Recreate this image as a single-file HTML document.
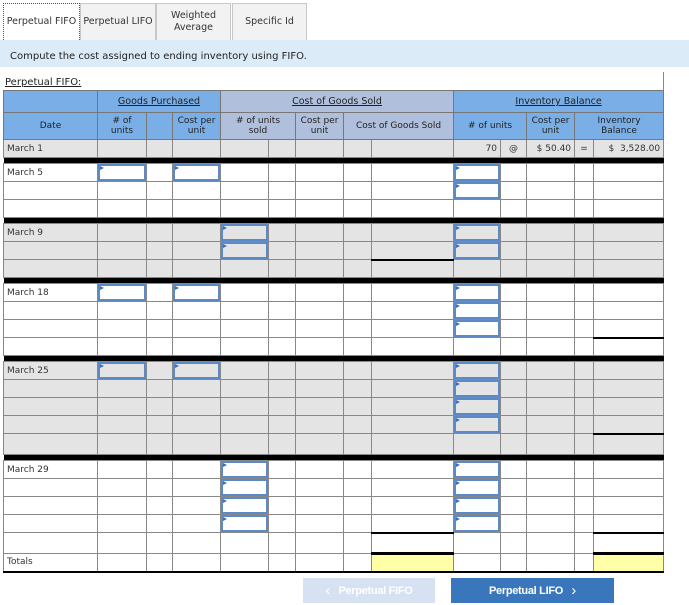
<!DOCTYPE html>
<html><head><meta charset="utf-8"><style>
*{margin:0;padding:0;box-sizing:border-box}
body{width:689px;height:605px;background:#fff;font-family:"DejaVu Sans","Liberation Sans",sans-serif;font-size:9px;color:#222;position:relative;overflow:hidden}
.tab{position:absolute;top:3px;height:37px;border:1px solid #c8c8c8;border-bottom:none;background:#f2f2f2;display:flex;align-items:center;justify-content:center;text-align:center;font-size:9.5px;line-height:12px;color:#333}
.bar{position:absolute;top:40px;left:0;width:689px;height:27px;background:#dcebf8;font-size:10px;padding:12px 0 0 10px;line-height:10px;color:#222}
.ttl{position:absolute;top:77px;left:5px;font-size:10px;text-decoration:underline;color:#222}
table{position:absolute;left:3px;top:90px;border-collapse:collapse;table-layout:fixed;width:660px}
td{border:1px solid #888;height:18px;padding:0 3px;position:relative;font-size:9px;white-space:nowrap;overflow:visible;color:#333}
.h td{background:#7aaee6;text-align:center;color:#222;border-color:#777}
.h td.c{background:#b0c0dc}
.h1 td{height:22px;text-decoration:underline;font-size:9.5px}
.h2 td{height:27px;font-size:9px;line-height:10px;text-decoration:none}
.g td{background:#e4e4e4}
.s td{height:6px;background:#000;border:none;padding:0}
td.b{border-left:1px solid #000}
i{position:absolute;left:0;top:0;right:0;bottom:0;border:2px solid #5b8ac6;display:block}
i:before{content:"";position:absolute;left:0;top:0;border-left:4px solid #3a6fbf;border-top:2px solid transparent;border-bottom:2px solid transparent}
.y{background:#ffffa8!important;border-top:3px solid #000}
.btn{position:absolute;top:578px;height:25px;display:flex;align-items:center;justify-content:center;font-family:"Liberation Sans",sans-serif;font-size:11px;font-weight:bold;color:#fff;letter-spacing:-0.3px}
.btn span{font-size:15px;font-weight:normal}
</style></head><body>
<div class="tab" style="left:3px;width:77px;background:#fff;border:1px dotted #555;border-bottom:none">Perpetual FIFO</div>
<div class="tab" style="left:80px;width:76px">Perpetual LIFO</div>
<div class="tab" style="left:156px;width:75px">Weighted<br>Average</div>
<div class="tab" style="left:232px;width:75px">Specific Id</div>
<div class="bar">Compute the cost assigned to ending inventory using FIFO.</div>
<div class="ttl">Perpetual FIFO:</div>
<div style="position:absolute;left:663px;top:72px;width:1px;height:18px;background:#888"></div>
<table>
<colgroup><col style="width:94px"><col style="width:49px"><col style="width:26px"><col style="width:48px"><col style="width:48px"><col style="width:27px"><col style="width:48px"><col style="width:28px"><col style="width:82px"><col style="width:47px"><col style="width:26px"><col style="width:48px"><col style="width:19px"><col style="width:70px"></colgroup>
<tr class="h h1"><td></td><td colspan="3" class="b">Goods Purchased</td><td colspan="5" class="c b">Cost of Goods Sold</td><td colspan="5" class="b">Inventory Balance</td></tr>
<tr class="h h2"><td>Date</td><td class="b"># of<br>units</td><td></td><td>Cost per<br>unit</td><td colspan="2" class="c b"># of units<br>sold</td><td class="c">Cost per<br>unit</td><td colspan="2" class="c">Cost of Goods Sold</td><td colspan="2" class="b"># of units</td><td>Cost per<br>unit</td><td colspan="2">Inventory<br>Balance</td></tr>
<tr class="g"><td>March 1</td><td class="b"></td><td></td><td></td><td class="b"></td><td></td><td></td><td></td><td></td><td class="b" style="text-align:right">70</td><td style="text-align:center">@</td><td style="text-align:right">$ 50.40</td><td style="text-align:center">=</td><td style="text-align:right">$ &nbsp;3,528.00</td></tr>
<tr class="s"><td colspan="14"></td></tr>
<tr><td>March 5</td><td class="b"><i></i></td><td></td><td><i></i></td><td class="b"></td><td></td><td></td><td></td><td></td><td class="b"><i></i></td><td></td><td></td><td></td><td></td></tr>
<tr><td></td><td class="b"></td><td></td><td></td><td class="b"></td><td></td><td></td><td></td><td></td><td class="b"><i></i></td><td></td><td></td><td></td><td></td></tr>
<tr><td></td><td class="b"></td><td></td><td></td><td class="b"></td><td></td><td></td><td></td><td></td><td class="b"></td><td></td><td></td><td></td><td></td></tr>
<tr class="s"><td colspan="14"></td></tr>
<tr class="g"><td>March 9</td><td class="b"></td><td></td><td></td><td class="b"><i></i></td><td></td><td></td><td></td><td></td><td class="b"><i></i></td><td></td><td></td><td></td><td></td></tr>
<tr class="g"><td></td><td class="b"></td><td></td><td></td><td class="b"><i></i></td><td></td><td></td><td></td><td></td><td class="b"><i></i></td><td></td><td></td><td></td><td></td></tr>
<tr class="g"><td></td><td class="b"></td><td></td><td></td><td class="b"></td><td></td><td></td><td></td><td style="border-top:2px solid #000"></td><td class="b"></td><td></td><td></td><td></td><td></td></tr>
<tr class="s"><td colspan="14"></td></tr>
<tr><td>March 18</td><td class="b"><i></i></td><td></td><td><i></i></td><td class="b"></td><td></td><td></td><td></td><td></td><td class="b"><i></i></td><td></td><td></td><td></td><td></td></tr>
<tr><td></td><td class="b"></td><td></td><td></td><td class="b"></td><td></td><td></td><td></td><td></td><td class="b"><i></i></td><td></td><td></td><td></td><td></td></tr>
<tr><td></td><td class="b"></td><td></td><td></td><td class="b"></td><td></td><td></td><td></td><td></td><td class="b"><i></i></td><td></td><td></td><td></td><td></td></tr>
<tr><td></td><td class="b"></td><td></td><td></td><td class="b"></td><td></td><td></td><td></td><td></td><td class="b"></td><td></td><td></td><td></td><td style="border-top:2px solid #000"></td></tr>
<tr class="s"><td colspan="14"></td></tr>
<tr class="g"><td>March 25</td><td class="b"><i></i></td><td></td><td><i></i></td><td class="b"></td><td></td><td></td><td></td><td></td><td class="b"><i></i></td><td></td><td></td><td></td><td></td></tr>
<tr class="g"><td></td><td class="b"></td><td></td><td></td><td class="b"></td><td></td><td></td><td></td><td></td><td class="b"><i></i></td><td></td><td></td><td></td><td></td></tr>
<tr class="g"><td></td><td class="b"></td><td></td><td></td><td class="b"></td><td></td><td></td><td></td><td></td><td class="b"><i></i></td><td></td><td></td><td></td><td></td></tr>
<tr class="g"><td></td><td class="b"></td><td></td><td></td><td class="b"></td><td></td><td></td><td></td><td></td><td class="b"><i></i></td><td></td><td></td><td></td><td></td></tr>
<tr class="g"><td style="height:21px"></td><td class="b"></td><td></td><td></td><td class="b"></td><td></td><td></td><td></td><td></td><td class="b"></td><td></td><td></td><td></td><td style="border-top:2px solid #000"></td></tr>
<tr class="s"><td colspan="14"></td></tr>
<tr><td>March 29</td><td class="b"></td><td></td><td></td><td class="b"><i></i></td><td></td><td></td><td></td><td></td><td class="b"><i></i></td><td></td><td></td><td></td><td></td></tr>
<tr><td></td><td class="b"></td><td></td><td></td><td class="b"><i></i></td><td></td><td></td><td></td><td></td><td class="b"><i></i></td><td></td><td></td><td></td><td></td></tr>
<tr><td></td><td class="b"></td><td></td><td></td><td class="b"><i></i></td><td></td><td></td><td></td><td></td><td class="b"><i></i></td><td></td><td></td><td></td><td></td></tr>
<tr><td></td><td class="b"></td><td></td><td></td><td class="b"><i></i></td><td></td><td></td><td></td><td></td><td class="b"><i></i></td><td></td><td></td><td></td><td></td></tr>
<tr><td style="height:21px"></td><td class="b"></td><td></td><td></td><td class="b"></td><td></td><td></td><td></td><td style="border-top:2px solid #000"></td><td class="b"></td><td></td><td></td><td></td><td style="border-top:2px solid #000"></td></tr>
<tr><td style="border-bottom:2px solid #000">Totals</td><td class="b" style="border-bottom:2px solid #000"></td><td style="border-bottom:2px solid #000"></td><td style="border-bottom:2px solid #000"></td><td class="b" style="border-bottom:2px solid #000"></td><td style="border-bottom:2px solid #000"></td><td style="border-bottom:2px solid #000"></td><td style="border-bottom:2px solid #000"></td><td class="y" style="border-bottom:2px solid #000"></td><td class="b" style="border-bottom:2px solid #000"></td><td style="border-bottom:2px solid #000"></td><td style="border-bottom:2px solid #000"></td><td style="border-bottom:2px solid #000"></td><td class="y" style="border-bottom:2px solid #000"></td></tr>
</table>
<div class="btn" style="left:303px;width:132px;background:#d6e2f1"><span>&#8249;</span>&nbsp;&nbsp;&nbsp;Perpetual FIFO</div>
<div class="btn" style="left:451px;width:163px;background:#3a76bb">Perpetual LIFO&nbsp;&nbsp;&nbsp;<span>&#8250;</span></div>
</body></html>
